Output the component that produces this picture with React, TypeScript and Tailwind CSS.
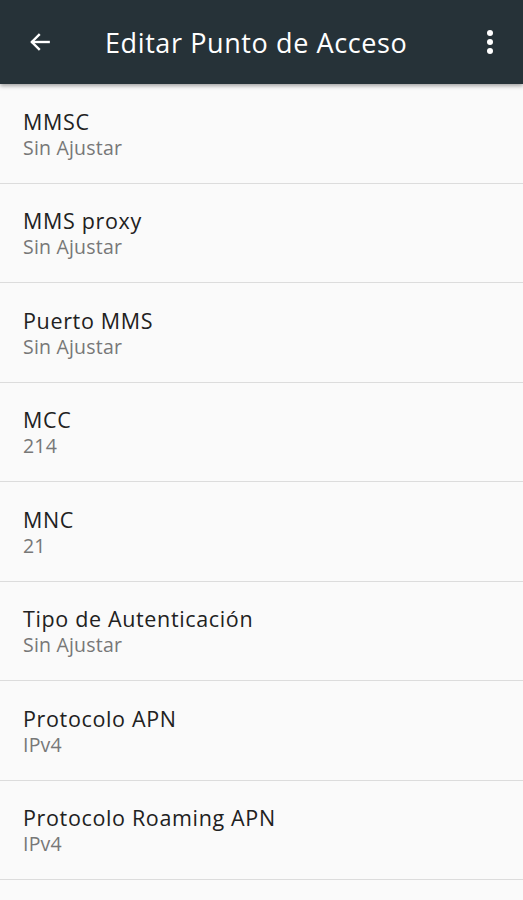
const rows = [
  { title: "MMSC", value: "Sin Ajustar" },
  { title: "MMS proxy", value: "Sin Ajustar" },
  { title: "Puerto MMS", value: "Sin Ajustar" },
  { title: "MCC", value: "214" },
  { title: "MNC", value: "21" },
  { title: "Tipo de Autenticación", value: "Sin Ajustar" },
  { title: "Protocolo APN", value: "IPv4" },
  { title: "Protocolo Roaming APN", value: "IPv4" },
];

export default function App() {
  return (
    <div className="h-[900px] w-[523px] overflow-hidden bg-[#fafafa] font-['Open_Sans',sans-serif]">
      <header className="relative z-10 flex h-[84px] items-center bg-[#263238] shadow-[0_2px_4px_rgba(0,0,0,0.35)]">
        <div className="flex w-[82px] items-center pl-[27px]">
          <svg width="26" height="26" viewBox="0 0 24 24" fill="none" stroke="#fff" strokeWidth="2.2" strokeLinecap="square">
            <path d="M20 12H5" />
            <path d="M11 5.5 4.5 12 11 18.5" />
          </svg>
        </div>
        <h1 className="ml-[23px] flex-1 text-[27px] leading-none tracking-[0.6px] text-white">Editar Punto de Acceso</h1>
        <div className="mr-[30px] flex flex-col gap-[3px]">
          <span className="h-[6px] w-[6px] rounded-full bg-white" />
          <span className="h-[6px] w-[6px] rounded-full bg-white" />
          <span className="h-[6px] w-[6px] rounded-full bg-white" />
        </div>
      </header>
      <ul>
        {rows.map((r) => (
          <li key={r.title} className="flex h-[99.5px] flex-col justify-center border-b border-[#dcdcdc] pl-[23px] pt-[1px]">
            <div className="text-[21.5px] leading-[27px] tracking-[0.65px] text-[#212121]">{r.title}</div>
            <div className="text-[19.5px] leading-[25px] tracking-[0.2px] text-[#777]">{r.value}</div>
          </li>
        ))}
      </ul>
    </div>
  );
}
